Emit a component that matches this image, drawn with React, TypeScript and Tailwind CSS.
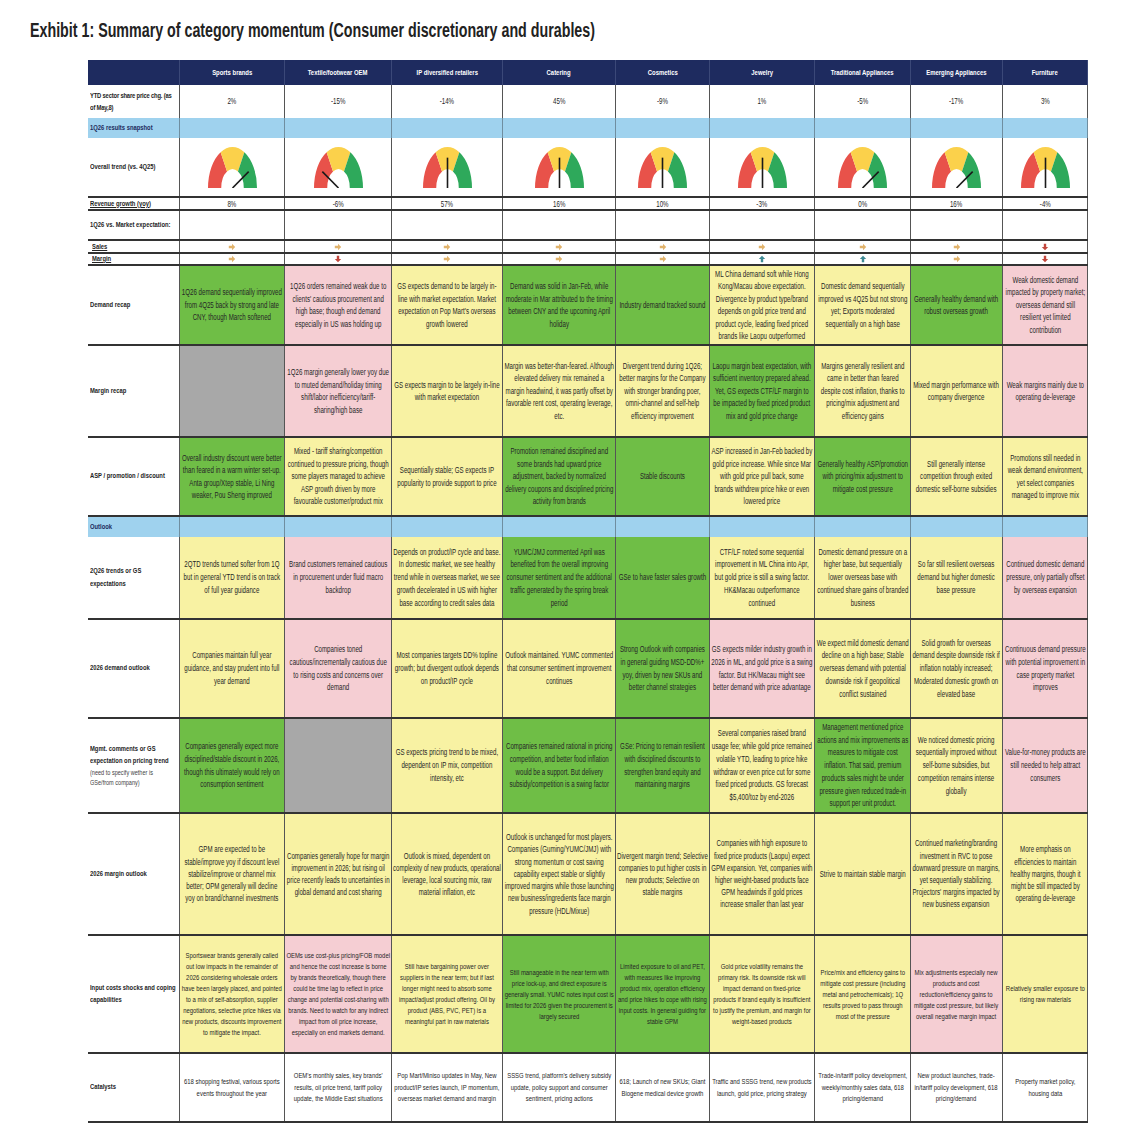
import type { ReactNode } from 'react';

type Fill = 'G' | 'P' | 'Y' | 'X' | 'W';
type Needle = 'up' | 'left' | 'right';
type Dir = 'flat' | 'up' | 'down';

const FILL: Record<Fill, string> = {
  G: 'bg-[#6fbe46]',
  P: 'bg-[#f5ced3]',
  Y: 'bg-[#f8f2a3]',
  X: 'bg-[#a8a8a8]',
  W: 'bg-white',
};

const GRID = 'grid grid-cols-[92px_105px_107px_111px_113px_94px_105px_96px_92px_85px]';
const LINE = 'border-b-2 border-[#333]';
const CELL = 'flex items-center justify-center text-center px-[1px] border-r border-[#555] text-[#262626]';
const LABEL = 'flex items-center px-[2px] border-r border-[#555] font-bold text-[#242424] text-[7.9px]';

const CATEGORIES = [
  'Sports brands',
  'Textile/footwear OEM',
  'IP diversified retailers',
  'Catering',
  'Cosmetics',
  'Jewelry',
  'Traditional Appliances',
  'Emerging Appliances',
  'Furniture',
];

const YTD = ['2%', '-15%', '-14%', '45%', '-9%', '1%', '-5%', '-17%', '3%'];
const REVENUE = ['8%', '-6%', '57%', '16%', '10%', '-3%', '0%', '16%', '-4%'];
const TREND: Needle[] = ['right', 'left', 'up', 'up', 'up', 'up', 'right', 'right', 'up'];
const SALES: Dir[] = ['flat', 'flat', 'flat', 'flat', 'flat', 'flat', 'flat', 'flat', 'down'];
const MARGIN: Dir[] = ['flat', 'down', 'flat', 'flat', 'flat', 'up', 'up', 'flat', 'down'];

type TextRow = { label: ReactNode; height: string; text: string; cells: [Fill, string][] };

const RECAP: TextRow[] = [
  {
    label: 'Demand recap',
    height: 'h-[80px]',
    text: 'text-[8.3px] leading-[12.5px]',
    cells: [
      ['G', '1Q26 demand sequentially improved from 4Q25 back by strong and late CNY, though March softened'],
      ['P', "1Q26 orders remained weak due to clients' cautious procurement and high base; though end demand especially in US was holding up"],
      ['Y', "GS expects demand to be largely in-line with market expectation. Market expectation on Pop Mart's overseas growth lowered"],
      ['G', 'Demand was solid in Jan-Feb, while moderate in Mar attributed to the timing between CNY and the upcoming April holiday'],
      ['G', 'Industry demand tracked sound'],
      ['Y', 'ML China demand soft while Hong Kong/Macau above expectation. Divergence by product type/brand depends on gold price trend and product cycle, leading fixed priced brands like Laopu outperformed'],
      ['Y', 'Domestic demand sequentially improved vs 4Q25 but not strong yet; Exports moderated sequentially on a high base'],
      ['G', 'Generally healthy demand with robust overseas growth'],
      ['P', 'Weak domestic demand impacted by property market; overseas demand still resilient yet limited contribution'],
    ],
  },
  {
    label: 'Margin recap',
    height: 'h-[92px]',
    text: 'text-[8.3px] leading-[12.5px]',
    cells: [
      ['X', ''],
      ['P', '1Q26 margin generally lower yoy due to muted demand/holiday timing shift/labor inefficiency/tariff-sharing/high base'],
      ['Y', 'GS expects margin to be largely in-line with market expectation'],
      ['Y', 'Margin was better-than-feared. Although elevated delivery mix remained a margin headwind, it was partly offset by favorable rent cost, operating leverage, etc.'],
      ['Y', 'Divergent trend during 1Q26; better margins for the Company with stronger branding poer, omni-channel and self-help efficiency improvement'],
      ['G', 'Laopu margin beat expectation, with sufficient inventory prepared ahead. Yet, GS expects CTF/LF margin to be impacted by fixed priced product mix and gold price change'],
      ['Y', 'Margins generally resilient and came in better than feared despite cost inflation, thanks to pricing/mix adjustment and efficiency gains'],
      ['Y', 'Mixed margin performance with company divergence'],
      ['P', 'Weak margins mainly due to operating de-leverage'],
    ],
  },
  {
    label: 'ASP / promotion / discount',
    height: 'h-[79px]',
    text: 'text-[8.3px] leading-[12.5px]',
    cells: [
      ['G', 'Overall industry discount were better than feared in a warm winter set-up. Anta group/Xtep stable, Li Ning weaker, Pou Sheng improved'],
      ['Y', 'Mixed - tariff sharing/competition continued to pressure pricing, though some players managed to achieve ASP growth driven by more favourable customer/product mix'],
      ['Y', 'Sequentially stable; GS expects IP popularity to provide support to price'],
      ['G', 'Promotion remained disciplined and some brands had upward price adjustment, backed by normalized delivery coupons and disciplined pricing activity from brands'],
      ['G', 'Stable discounts'],
      ['Y', 'ASP increased in Jan-Feb backed by gold price increase. While since Mar with gold price pull back, some brands withdrew price hike or even lowered price'],
      ['G', 'Generally healthy ASP/promotion with pricing/mix adjustment to mitigate cost pressure'],
      ['Y', 'Still generally intense competition through exited domestic self-borne subsidies'],
      ['Y', 'Promotions still needed in weak demand environment, yet select companies managed to improve mix'],
    ],
  },
];

const OUTLOOK: TextRow[] = [
  {
    label: '2Q26 trends or GS expectations',
    height: 'h-[83px]',
    text: 'text-[8.3px] leading-[12.8px]',
    cells: [
      ['Y', '2QTD trends turned softer from 1Q but in general YTD trend is on track of full year guidance'],
      ['P', 'Brand customers remained cautious in procurement under fluid macro backdrop'],
      ['Y', 'Depends on product/IP cycle and base. In domestic market, we see healthy trend while in overseas market, we see growth decelerated in US with higher base according to credit sales data'],
      ['G', 'YUMC/JMJ commented April was benefited from the overall improving consumer sentiment and the additional traffic generated by the spring break period'],
      ['G', 'GSe to have faster sales growth'],
      ['Y', 'CTF/LF noted some sequential improvement in ML China into Apr, but gold price is still a swing factor. HK&Macau outperformance continued'],
      ['Y', 'Domestic demand pressure on a higher base, but sequentially lower overseas base with continued share gains of branded business'],
      ['Y', 'So far still resilient overseas demand but higher domestic base pressure'],
      ['P', 'Continued domestic demand pressure, only partially offset by overseas expansion'],
    ],
  },
  {
    label: '2026 demand outlook',
    height: 'h-[99px]',
    text: 'text-[8.3px] leading-[12.7px]',
    cells: [
      ['Y', 'Companies maintain full year guidance,  and stay prudent into full year demand'],
      ['P', 'Companies toned cautious/incrementally cautious due to rising costs and concerns over demand'],
      ['Y', 'Most companies targets DD% topline growth; but divergent outlook depends on product/IP cycle'],
      ['Y', 'Outlook maintained. YUMC commented that consumer sentiment improvement continues'],
      ['G', 'Strong Outlook with companies in general guiding MSD-DD%+ yoy, driven by new SKUs and better channel strategies'],
      ['P', 'GS expects milder industry growth in 2026 in ML, and gold price is a swing factor. But HK/Macau might see better demand with price advantage'],
      ['Y', 'We expect mild domestic demand decline on a high base; Stable overseas demand with potential downside risk if geopolitical conflict sustained'],
      ['Y', 'Solid growth for overseas demand despite downside risk if inflation notably increased; Moderated domestic growth on elevated base'],
      ['P', 'Continuous demand pressure with potential improvement in case property market improves'],
    ],
  },
  {
    label: (
      <div>
        <div>Mgmt. comments or GS expectation on pricing trend</div>
        <div className="text-[7.5px] font-normal leading-[10.5px] text-[#444]">(need to specify wether is GSe/from company)</div>
      </div>
    ),
    height: 'h-[95px]',
    text: 'text-[8.3px] leading-[12.7px]',
    cells: [
      ['G', 'Companies generally expect more disciplined/stable discount in 2026, though this ultimately would rely on consumption sentiment'],
      ['X', ''],
      ['Y', 'GS expects pricing trend to be mixed, dependent on IP mix, competition intensity, etc'],
      ['G', 'Companies remained rational in pricing competition, and better food inflation would be a support. But delivery subsidy/competition is a swing factor'],
      ['G', 'GSe: Pricing to remain resilient with disciplined discounts to strengthen brand equity and maintaining margins'],
      ['Y', 'Several companies raised brand usage fee; while gold price remained volatile YTD, leading to price hike withdraw or even price cut for some fixed priced products. GS forecast $5,400/toz by end-2026'],
      ['G', 'Management mentioned price actions and mix improvements as measures to mitigate cost inflation. That said, premium products sales might be under pressure given reduced trade-in support per unit product.'],
      ['Y', 'We noticed domestic pricing sequentially improved without self-borne subsidies, but competition remains intense globally'],
      ['P', 'Value-for-money products are still needed to help attract consumers'],
    ],
  },
  {
    label: '2026 margin outlook',
    height: 'h-[122px]',
    text: 'text-[8.3px] leading-[12.2px]',
    cells: [
      ['Y', 'GPM are expected to be stable/improve yoy if discount level stabilize/improve or channel mix better; OPM generally will decline yoy on brand/channel investments'],
      ['Y', 'Companies generally hope for margin improvement in 2026; but rising oil price recently leads to uncertainties in global demand and cost sharing'],
      ['Y', 'Outlook is mixed, dependent on complexity of new products, operational leverage, local sourcing mix, raw material inflation, etc'],
      ['Y', 'Outlook is unchanged for most players. Companies (Guming/YUMC/JMJ) with strong momentum or cost saving capability expect stable or slightly improved margins while those launching new business/ingredients face margin pressure (HDL/Mixue)'],
      ['Y', 'Divergent margin trend; Selective companies to put higher costs in new products; Selective on stable margins'],
      ['Y', 'Companies with high exposure to fixed price products (Laopu) expect GPM expansion. Yet, companies with higher weight-based products face GPM headwinds if gold prices increase smaller than last year'],
      ['Y', 'Strive to maintain stable margin'],
      ['Y', "Continued marketing/branding investment in RVC to pose downward pressure on margins, yet sequentially stabilizing. Projectors' margins impacted by new business expansion"],
      ['Y', 'More emphasis on efficiencies to maintain healthy margins, though it might be still impacted by operating de-leverage'],
    ],
  },
  {
    label: 'Input costs shocks and coping capabilities',
    height: 'h-[118px]',
    text: 'text-[8px] leading-[11px]',
    cells: [
      ['Y', 'Sportswear brands generally called out low impacts in the remainder of 2026 considering wholesale orders have been largely placed, and pointed to a mix of self-absorption, supplier negotiations, selective price hikes via new products, discounts improvement to mitigate the impact.'],
      ['P', 'OEMs use cost-plus pricing/FOB model and hence the cost increase is borne by brands theoretically, though there could be time lag to reflect in price change and potential cost-sharing with brands. Need to watch for any indirect impact from oil price increase, especially on end markets demand.'],
      ['Y', 'Still have bargaining power over suppliers in the near term; but if last longer might need to absorb some impact/adjust product offering. Oil by product (ABS, PVC, PET) is a meaningful part in raw materials'],
      ['G', 'Still manageable in the near term with price lock-up, and direct exposure is generally small. YUMC notes input cost is limited for 2026 given the procurement is largely secured'],
      ['G', 'Limited exposure to oil and PET, with measures like improving product mix, operation efficiency and price hikes to cope with rising input costs. In general guiding for stable GPM'],
      ['Y', 'Gold price volatility remains the primary risk. Its downside risk will impact demand on fixed-price products if brand equity is insufficient to justify the premium, and margin for weight-based products'],
      ['Y', 'Price/mix and efficiency gains to mitigate cost pressure (including metal and petrochemicals); 1Q results proved to pass through most of the pressure'],
      ['P', 'Mix adjustments especially new products and cost reduction/efficiency gains to mitigate cost pressure, but likely overall negative margin impact'],
      ['Y', 'Relatively smaller exposure to rising raw materials'],
    ],
  },
  {
    label: 'Catalysts',
    height: 'h-[69px]',
    text: 'text-[8px] leading-[11.5px]',
    cells: [
      ['W', '618 shopping festival, various sports events throughout the year'],
      ['W', "OEM's monthly sales, key brands' results, oil price trend, tariff policy update, the Middle East situations"],
      ['W', 'Pop Mart/Miniso updates in May, New product/IP series launch, IP momentum, overseas market demand and margin'],
      ['W', "SSSG trend, platform's delivery subsidy update, policy support and consumer sentiment, pricing actions"],
      ['W', '618; Launch of new SKUs; Giant Biogene medical device growth'],
      ['W', 'Traffic and SSSG trend, new products launch, gold price, pricing strategy'],
      ['W', 'Trade-in/tariff policy development, weekly/monthly sales data, 618 pricing/demand'],
      ['W', 'New product launches, trade-in/tariff policy development, 618 pricing/demand'],
      ['W', 'Property market policy, housing data'],
    ],
  },
];

// The exhibit uses a condensed face: lay Arial-metric text out wider, then squeeze it back into the cell.
function Narrow({ children, left }: { children: ReactNode; left?: boolean }) {
  return (
    <div className={left ? 'w-[135%] shrink-0 origin-left scale-x-[0.74]' : 'w-[135%] shrink-0 scale-x-[0.74]'}>
      {children}
    </div>
  );
}

const pt = (r: number, a: number) => {
  const rad = (a * Math.PI) / 180;
  return `${(50 + r * Math.cos(rad)).toFixed(2)} ${(50 - r * Math.sin(rad)).toFixed(2)}`;
};
const sector = (a1: number, a2: number) =>
  `M${pt(50, a1)} A50 50 0 0 1 ${pt(50, a2)} L${pt(23, a2)} A23 23 0 0 0 ${pt(23, a1)} Z`;

function Gauge({ needle }: { needle: Needle }) {
  const [x2, y2] = needle === 'up' ? [50, 13] : needle === 'left' ? [17, 30] : [83, 30];
  return (
    <svg viewBox="0 0 100 50" preserveAspectRatio="none" className="h-[41px] w-[49px]">
      <path d={sector(180, 119)} fill="#e8524a" />
      <path d={sector(119, 61)} fill="#fbd14b" />
      <path d={sector(61, 0)} fill="#2ea95b" />
      <line x1="50" y1="50" x2={x2} y2={y2} stroke="#1a1a1a" strokeWidth="1.6" vectorEffect="non-scaling-stroke" />
    </svg>
  );
}

function Arrow({ dir }: { dir: Dir }) {
  const color = dir === 'flat' ? '#e1b36c' : dir === 'up' ? '#3f8b95' : '#c2473d';
  const rot = dir === 'flat' ? 0 : dir === 'up' ? -90 : 90;
  return (
    <svg viewBox="0 0 10 10" className="h-[8px] w-[8px]">
      <path d="M1 3.5H5V1l4 4-4 4V6.5H1z" fill={color} transform={`rotate(${rot} 5 5)`} />
    </svg>
  );
}

function Band({ label }: { label: string }) {
  return (
    <div className={`${GRID} h-[20px] bg-[#9fd2ee]`}>
      <div className="flex items-center border-r border-[#6f8ea0] px-[2px] text-[7.9px] font-bold text-[#1d2b5c]">
        <Narrow left>{label}</Narrow>
      </div>
      {CATEGORIES.map((c) => (
        <div key={c} className="border-r border-[#6f8ea0]" />
      ))}
    </div>
  );
}

function TextRows({ rows }: { rows: TextRow[] }) {
  return (
    <>
      {rows.map((r, i) => (
        <div key={i} className={`${GRID} ${r.height} ${LINE}`}>
          <div className={`${LABEL} leading-[12.5px]`}>
            <Narrow left>{r.label}</Narrow>
          </div>
          {r.cells.map(([f, t], j) => (
            <div key={j} className={`${CELL} ${FILL[f]} ${r.text}`}>
              <Narrow>{t}</Narrow>
            </div>
          ))}
        </div>
      ))}
    </>
  );
}

export default function App() {
  return (
    <div className="min-h-screen bg-white pt-[18px] font-['Liberation_Sans',Arial,sans-serif]">
      <div className="pl-[30px]">
        <h1 className="origin-left scale-x-[0.713] whitespace-nowrap text-[20px] font-bold leading-[24px] text-[#222]">
          Exhibit 1: Summary of category momentum (Consumer discretionary and durables)
        </h1>
      </div>

      <div className="ml-[88px] mt-[18px] w-[1000px]">
        {/* Header */}
        <div className={`${GRID} h-[25px] bg-[#1e2b5f]`}>
          <div className="border-r border-[#3b4878]" />
          {CATEGORIES.map((c) => (
            <div key={c} className="flex items-center justify-center border-r border-[#3b4878] text-center text-[8px] font-bold text-white">
              <Narrow>{c}</Narrow>
            </div>
          ))}
        </div>

        {/* YTD */}
        <div className={`${GRID} h-[33px]`}>
          <div className={`${LABEL} leading-[11.5px] tracking-[-0.25px]`}>
            <Narrow left>YTD sector share price chg. (as of May,8)</Narrow>
          </div>
          {YTD.map((v, i) => (
            <div key={i} className={`${CELL} text-[8.3px]`}>
              <Narrow>{v}</Narrow>
            </div>
          ))}
        </div>

        <Band label="1Q26 results snapshot" />

        {/* Gauges */}
        <div className={`${GRID} h-[60px] ${LINE}`}>
          <div className={LABEL}>
            <Narrow left>Overall trend (vs. 4Q25)</Narrow>
          </div>
          {TREND.map((n, i) => (
            <div key={i} className={CELL}>
              <Gauge needle={n} />
            </div>
          ))}
        </div>

        <div className={`${GRID} h-[13px] ${LINE}`}>
          <div className={`${LABEL} leading-[10px] underline`}>
            <Narrow left>Revenue growth (yoy)</Narrow>
          </div>
          {REVENUE.map((v, i) => (
            <div key={i} className={`${CELL} text-[8.3px] leading-[10px]`}>
              <Narrow>{v}</Narrow>
            </div>
          ))}
        </div>

        <div className={`${GRID} h-[30px] ${LINE}`}>
          <div className={LABEL}>
            <Narrow left>1Q26 vs. Market expectation:</Narrow>
          </div>
          {CATEGORIES.map((c) => (
            <div key={c} className={CELL} />
          ))}
        </div>

        <div className={`${GRID} h-[13px] ${LINE}`}>
          <div className={`${LABEL} pl-[4px] leading-[10px] underline`}>
            <Narrow left>Sales</Narrow>
          </div>
          {SALES.map((d, i) => (
            <div key={i} className={CELL}>
              <Arrow dir={d} />
            </div>
          ))}
        </div>

        <div className={`${GRID} h-[12px] ${LINE}`}>
          <div className={`${LABEL} pl-[4px] leading-[10px] underline`}>
            <Narrow left>Margin</Narrow>
          </div>
          {MARGIN.map((d, i) => (
            <div key={i} className={CELL}>
              <Arrow dir={d} />
            </div>
          ))}
        </div>

        <TextRows rows={RECAP} />

        <Band label="Outlook" />

        <TextRows rows={OUTLOOK} />
      </div>
    </div>
  );
}
